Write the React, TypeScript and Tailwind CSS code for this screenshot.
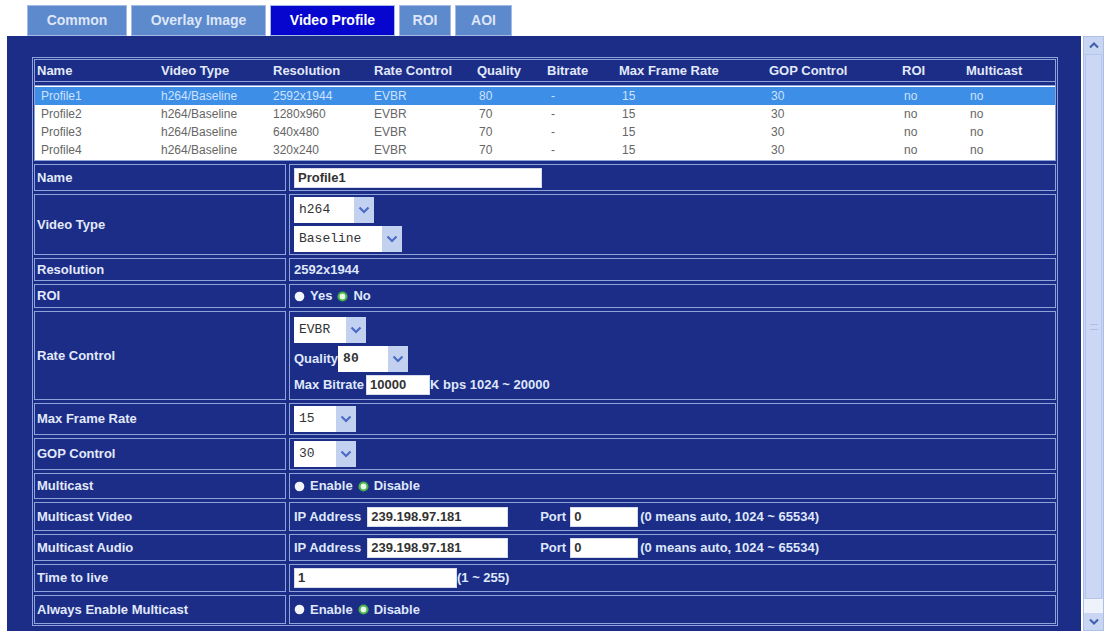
import type { ReactNode } from "react";

const cols = [124, 112, 101, 103, 70, 72, 150, 133, 64, 71];
const heads = ["Name", "Video Type", "Resolution", "Rate Control", "Quality", "Bitrate", "Max Frame Rate", "GOP Control", "ROI", "Multicast"];
const profiles = [
  ["Profile1", "h264/Baseline", "2592x1944", "EVBR", "80", "-", "15", "30", "no", "no"],
  ["Profile2", "h264/Baseline", "1280x960", "EVBR", "70", "-", "15", "30", "no", "no"],
  ["Profile3", "h264/Baseline", "640x480", "EVBR", "70", "-", "15", "30", "no", "no"],
  ["Profile4", "h264/Baseline", "320x240", "EVBR", "70", "-", "15", "30", "no", "no"],
];
// small nudges so the list text sits like the original
const listPad = [6, 2, 2, 2, 4, 6, 5, 4, 4, 6];

const Chevron = () => (
  <svg width="12" height="8" viewBox="0 0 12 8">
    <path d="M1.5 1.5 L6 6 L10.5 1.5" fill="none" stroke="#4b6cc4" strokeWidth="2.2" />
  </svg>
);

const Select = ({ value, width }: { value: string; width: string }) => (
  <div className={`flex h-[26px] bg-white ${width}`}>
    <span className="flex-1 flex items-center pl-[5px] font-['Liberation_Mono',monospace] text-[13px] text-[#333]">{value}</span>
    <span className="w-[20px] bg-[#c3d1f1] flex items-center justify-center">
      <Chevron />
    </span>
  </div>
);

const Input = ({ value, width, bold }: { value: string; width: string; bold?: boolean }) => (
  <div className={`h-[20px] bg-white border border-[#d6dcec] flex items-center pl-[3px] text-[13px] text-[#333] ${bold ? "font-bold" : ""} ${width}`}>
    {value}
  </div>
);

const Radio = ({ on }: { on?: boolean }) =>
  on ? (
    <svg width="11" height="11" viewBox="0 0 11 11">
      <circle cx="5.5" cy="5.5" r="4" fill="#e9f8e6" stroke="#48b04c" strokeWidth="2.2" />
    </svg>
  ) : (
    <svg width="11" height="11" viewBox="0 0 11 11">
      <circle cx="5.5" cy="5.5" r="4.8" fill="#f2f5fb" />
    </svg>
  );

const Radios = ({ a, b }: { a: string; b: string }) => (
  <div className="flex items-center gap-[5px] font-bold text-[13px] text-[#dfe7fb]">
    <Radio />
    <span>{a}</span>
    <Radio on />
    <span>{b}</span>
  </div>
);

const Row = ({ label, h, children }: { label: string; h: string; children?: ReactNode }) => (
  <div className={`flex gap-[3px] ${h}`}>
    <div className="w-[252px] border border-[#8fa3da] flex items-center pl-[2px] font-bold text-[13px] text-[#e2e9fb]">{label}</div>
    <div className="flex-1 border border-[#8fa3da] flex flex-col justify-center pl-[4px] gap-[3px]">{children}</div>
  </div>
);

const Tab = ({ label, width, active }: { label: string; width: string; active?: boolean }) => (
  <div
    className={`h-[31px] flex items-center justify-center font-bold text-[14px] border border-[#a3bbe6] ${width} ${
      active ? "bg-[#0606cf] text-white" : "bg-[#5d89cd] text-[#dde7f8]"
    }`}
  >
    {label}
  </div>
);

const Multi = ({ ip }: { ip: string }) => (
  <div className="flex items-center font-bold text-[13px] text-[#dfe7fb]">
    <span className="mr-[6px]">IP Address</span>
    <Input value={ip} width="w-[141px]" />
    <span className="ml-[32px] mr-[4px]">Port</span>
    <Input value="0" width="w-[68px]" />
    <span className="ml-[2px]">(0 means auto, 1024 ~ 65534)</span>
  </div>
);

export default function App() {
  return (
    <div className="w-[1106px] h-[631px] overflow-hidden bg-white flex flex-col font-['Liberation_Sans',Arial,sans-serif]">
      <div className="h-[36px] pt-[5px] pl-[27px] flex gap-[4px]">
        <Tab label="Common" width="w-[100px]" />
        <Tab label="Overlay Image" width="w-[135px]" />
        <Tab label="Video Profile" width="w-[125px]" active />
        <Tab label="ROI" width="w-[52px]" />
        <Tab label="AOI" width="w-[57px]" />
      </div>

      <div className="flex-1 flex gap-[2px] min-h-0">
        <div className="ml-[7px] w-[1074px] bg-[#1b2d86] pt-[21px] pl-[25px]">
          <div className="w-[1026px] border border-[#8fa3da] p-[1px] flex flex-col gap-[3px]">
            <div className="border border-[#8fa3da]">
              <div className="h-[22px] flex items-center border-b border-[#8fa3da] font-bold text-[13px] text-[#e2e9fb]">
                {heads.map((t, i) => (
                  <div key={t} className="pl-[2px] shrink-0" style={{ width: cols[i] }}>
                    {t}
                  </div>
                ))}
              </div>
              <div className="mt-[3px] border-t border-[#8fa3da] bg-white py-[1px]">
                {profiles.map((r, ri) => (
                  <div
                    key={r[0]}
                    className={`h-[18px] flex items-center text-[12px] ${ri === 0 ? "bg-[#3d8ee6] text-[#cfe2ff]" : "text-[#666]"}`}
                  >
                    {r.map((c, i) => (
                      <div key={i} className="shrink-0" style={{ width: cols[i], paddingLeft: listPad[i] }}>
                        {c}
                      </div>
                    ))}
                  </div>
                ))}
              </div>
            </div>

            <Row label="Name" h="h-[27px]">
              <Input value="Profile1" width="w-[248px]" bold />
            </Row>
            <Row label="Video Type" h="h-[61px]">
              <Select value="h264" width="w-[80px]" />
              <Select value="Baseline" width="w-[108px]" />
            </Row>
            <Row label="Resolution" h="h-[23px]">
              <span className="font-bold text-[13px] text-[#dfe7fb]">2592x1944</span>
            </Row>
            <Row label="ROI" h="h-[24px]">
              <Radios a="Yes" b="No" />
            </Row>
            <Row label="Rate Control" h="h-[89px]">
              <Select value="EVBR" width="w-[72px]" />
              <div className="flex items-center font-bold text-[13px] text-[#dfe7fb]">
                <span>Quality</span>
                <Select value="80" width="w-[70px]" />
              </div>
              <div className="flex items-center font-bold text-[13px] text-[#dfe7fb]">
                <span className="mr-[2px]">Max Bitrate</span>
                <Input value="10000" width="w-[64px]" />
                <span>K bps 1024 ~ 20000</span>
              </div>
            </Row>
            <Row label="Max Frame Rate" h="h-[32px]">
              <Select value="15" width="w-[62px]" />
            </Row>
            <Row label="GOP Control" h="h-[32px]">
              <Select value="30" width="w-[62px]" />
            </Row>
            <Row label="Multicast" h="h-[26px]">
              <Radios a="Enable" b="Disable" />
            </Row>
            <Row label="Multicast Video" h="h-[29px]">
              <Multi ip="239.198.97.181" />
            </Row>
            <Row label="Multicast Audio" h="h-[27px]">
              <Multi ip="239.198.97.181" />
            </Row>
            <Row label="Time to live" h="h-[28px]">
              <div className="flex items-center font-bold text-[13px] text-[#dfe7fb]">
                <Input value="1" width="w-[163px]" />
                <span>(1 ~ 255)</span>
              </div>
            </Row>
            <Row label="Always Enable Multicast" h="h-[29px]">
              <Radios a="Enable" b="Disable" />
            </Row>
          </div>
        </div>

        <div className="w-[21px] bg-[#c9d6f3] border border-[#aebfe6] flex flex-col">
          <div className="h-[17px] flex items-center justify-center">
            <svg width="10" height="7" viewBox="0 0 10 7">
              <path d="M1 5.5 L5 1.5 L9 5.5" fill="none" stroke="#3f5fa8" strokeWidth="2" />
            </svg>
          </div>
          <div className="flex-1 mx-[1px] bg-[#cbd7f4] border border-[#b6c6ea] flex items-center justify-center">
            <div className="w-[8px] h-[6px] border-y border-[#aebde4]" />
          </div>
          <div className="h-[14px] bg-[#eef2fb]" />
          <div className="h-[17px] flex items-center justify-center">
            <svg width="10" height="7" viewBox="0 0 10 7">
              <path d="M1 1.5 L5 5.5 L9 1.5" fill="none" stroke="#3f5fa8" strokeWidth="2" />
            </svg>
          </div>
        </div>
      </div>
    </div>
  );
}
